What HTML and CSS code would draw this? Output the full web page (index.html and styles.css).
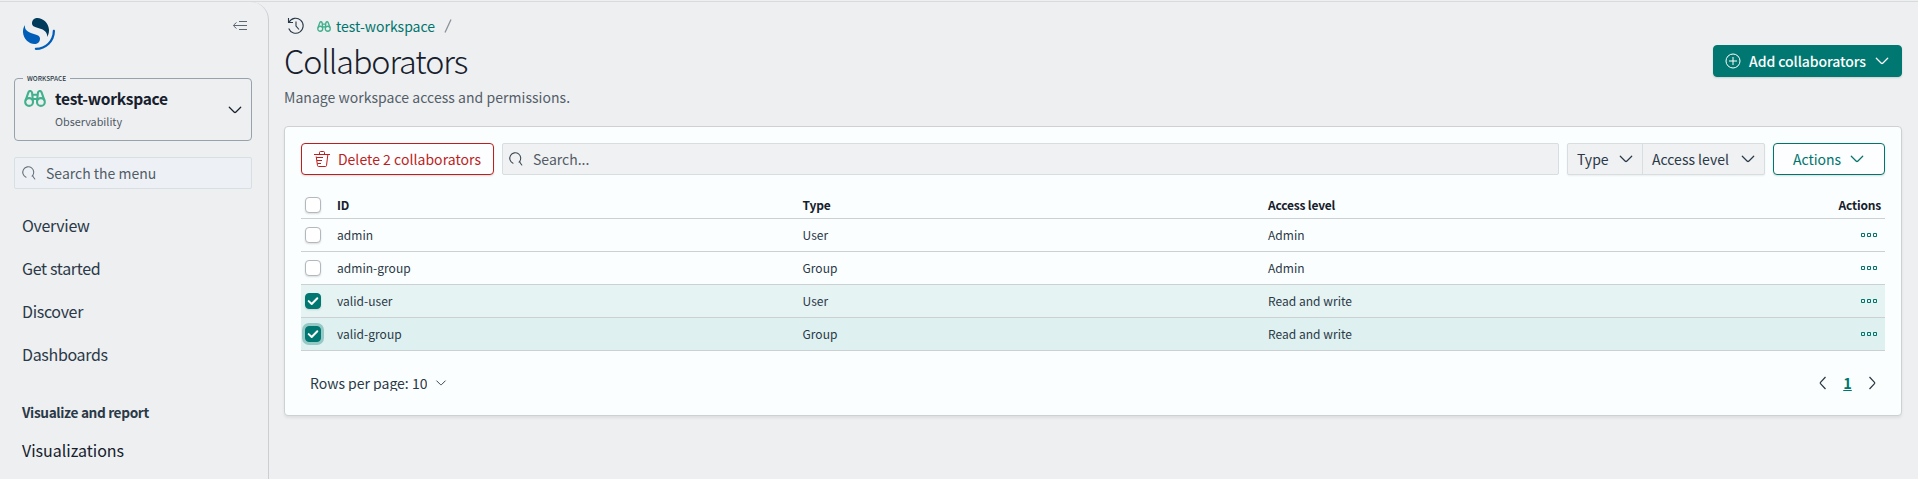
FILE: index.html
```
<!DOCTYPE html>
<html lang="en">
<head>
<meta charset="utf-8">
<title>Collaborators</title>
<link rel="stylesheet" href="styles.css">
</head>
<body>
<svg class="defs" aria-hidden="true">
  <symbol id="down" viewBox="0 0 16 16"><path d="M2.3 5.2l5 5q.7.6 1.4 0l5-5" fill="none" stroke="currentColor" stroke-width="1.25" stroke-linecap="round"/></symbol>
  <symbol id="search" viewBox="0 0 16 16"><path d="M5 12.300A5.500 5.500 0 1 1 11.200 11.100M11 11l1.200 0M12.300 12l1.500 2" fill="none" stroke="currentColor" stroke-width="1.1" stroke-linecap="round"/></symbol>
  <symbol id="binoculars" viewBox="0 0 22 17"><g fill="none" stroke="currentColor" stroke-width="2.1" stroke-linejoin="round"><circle cx="5.1" cy="12" r="3.9"/><circle cx="16.9" cy="12" r="3.9"/><path d="M1.5 10.6L4.5 2.2Q5 1 6.2 1T8 2.4L9 11M20.5 10.6L17.5 2.2Q17 1 15.8 1T14 2.4L13 11M8.2 4.7h5.6M8.7 9h4.6"/></g></symbol>
  <symbol id="check" viewBox="0 0 16 16"><path d="M3.7 8.1l3 2.9 5.6-5.7" fill="none" stroke="#fff" stroke-width="2" stroke-linecap="round" stroke-linejoin="round"/></symbol>
  <symbol id="boxes" viewBox="0 0 16 4"><path d="M.5.5h3v3h-3zM6.500.5h3v3h-3zM12.500.5h3v3h-3z" fill="none" stroke="currentColor"/></symbol>
</svg>
<div class="app">
  <aside class="sidebar">
    <div class="brand">
      <svg class="logo" viewBox="0 0 64 64"><path fill="#005EB8" d="M61.7374 23.5C60.4878 23.5 59.4748 24.513 59.4748 25.7626C59.4748 44.3813 44.3813 59.4748 25.7626 59.4748C24.513 59.4748 23.5 60.4878 23.5 61.7374C23.5 62.987 24.513 64 25.7626 64C46.8805 64 64 46.8805 64 25.7626C64 24.513 62.987 23.5 61.7374 23.5Z"/><path fill="#003B5C" d="M48.0814 38C50.2572 34.4505 52.3615 29.7178 51.9475 23.0921C51.0899 9.36725 38.6589 -1.04463 26.9206 0.0837327C22.3253 0.525465 17.6068 4.2712 18.026 10.9805C18.2082 13.8961 19.6352 15.6169 21.9544 16.9399C24.1618 18.1992 26.9978 18.9969 30.2128 19.9011C34.0962 20.9934 38.6009 22.2203 42.063 24.7717C46.2125 27.8295 49.0491 31.3743 48.0814 38Z"/><path fill="#005EB8" d="M3.91861 14C1.74276 17.5495 -0.361506 22.2822 0.0524931 28.9079C0.910072 42.6327 13.3411 53.0446 25.0794 51.9163C29.6747 51.4745 34.3932 47.7288 33.974 41.0195C33.7918 38.1039 32.3647 36.3831 30.0456 35.0601C27.8382 33.8008 25.0022 33.0031 21.7872 32.0989C17.9038 31.0066 13.3991 29.7797 9.93694 27.2283C5.78746 24.1704 2.95092 20.6257 3.91861 14Z"/></svg>
      <svg class="collapse" viewBox="0 0 16 16"><path d="M7 3.500h8M1.500 7.500H15M7 11.500h8M4.500 4.500L2 6.700Q1 7.500 2 8.300L4.500 10.500" fill="none" stroke="currentColor"/></svg>
    </div>
    <fieldset class="workspace">
      <legend>WORKSPACE</legend>
      <svg class="ws-icon"><use href="#binoculars"/></svg>
      <div class="ws-text"><div class="ws-name">test-workspace</div><div class="ws-kind">Observability</div></div>
      <svg class="icon"><use href="#down"/></svg>
    </fieldset>
    <div class="menu-search"><svg class="icon"><use href="#search"/></svg><span>Search the menu</span></div>
    <nav class="menu">
      <a>Overview</a><a>Get started</a><a>Discover</a><a>Dashboards</a>
      <h2>Visualize and report</h2>
      <a class="sub">Visualizations</a>
    </nav>
  </aside>
  <main class="main">
    <div class="crumbs">
      <svg class="history" viewBox="0 0 18 18"><path d="M1.500 1v4.500H6M2 5.300A7.500 7.500 0 1 1 1.700 11.500M9 4.500V9l3 3.500" fill="none" stroke="currentColor" stroke-width="1.100"/></svg>
      <svg class="crumb-icon"><use href="#binoculars"/></svg>
      <a>test-workspace</a>
      <svg class="slash" viewBox="0 0 8 14"><path d="M1 13.500L7 .5" stroke="#8b9298" stroke-width="1.300"/></svg>
    </div>
    <div class="heading">
      <h1>Collaborators</h1>
      <button class="btn primary"><svg class="icon" viewBox="0 0 16 16"><g fill="none" stroke="currentColor"><circle cx="8" cy="8" r="7"/><path d="M8 4v8M4 8h8"/></g></svg><span>Add collaborators</span><svg class="icon"><use href="#down"/></svg></button>
    </div>
    <p class="desc">Manage workspace access and permissions.</p>
    <section class="panel">
      <div class="toolbar">
        <button class="btn danger"><svg class="icon" viewBox="0 0 16 16"><path d="M0 3.500h16M5.500 3.500V1.500q0-1 1-1h3q1 0 1 1v2M2.200 5.500l1.300 9q.1 1 1.100 1h6.800q1 0 1.100-1l1.300-10.500M2.500 6.500H9M3 9.500h5M3.500 12.500H7" fill="none" stroke="currentColor"/></svg><span>Delete 2 collaborators</span></button>
        <div class="search"><svg class="icon"><use href="#search"/></svg><span>Search...</span></div>
        <div class="filters">
          <button class="filter type"><span>Type</span><svg class="icon"><use href="#down"/></svg></button>
          <button class="filter"><span>Access level</span><svg class="icon"><use href="#down"/></svg></button>
        </div>
        <button class="btn outline"><span>Actions</span><svg class="icon"><use href="#down"/></svg></button>
      </div>
      <div class="table">
        <div class="row head"><i class="box"></i><span>ID</span><span>Type</span><span>Access level</span><span class="end">Actions</span></div>
        <div class="row"><i class="box"></i><span>admin</span><span>User</span><span>Admin</span><svg class="more"><use href="#boxes"/></svg></div>
        <div class="row"><i class="box"></i><span>admin-group</span><span>Group</span><span>Admin</span><svg class="more"><use href="#boxes"/></svg></div>
        <div class="row selected"><i class="box on"><svg><use href="#check"/></svg></i><span>valid-user</span><span>User</span><span>Read and write</span><svg class="more"><use href="#boxes"/></svg></div>
        <div class="row selected hover"><i class="box on focus"><svg><use href="#check"/></svg></i><span>valid-group</span><span>Group</span><span>Read and write</span><svg class="more"><use href="#boxes"/></svg></div>
      </div>
      <div class="footer">
        <div class="per-page"><span>Rows per page: 10</span><svg><use href="#down"/></svg></div>
        <div class="pager">
          <svg class="icon" viewBox="0 0 16 16"><path d="M10.500 2l-5 5.300q-.6.7 0 1.400l5 5.300" fill="none" stroke="currentColor" stroke-width="1.250"/></svg>
          <b>1</b>
          <svg class="icon" viewBox="0 0 16 16"><path d="M5.500 2l5 5.300q.6.7 0 1.400l-5 5.300" fill="none" stroke="currentColor" stroke-width="1.250"/></svg>
        </div>
      </div>
    </section>
  </main>
</div>
</body>
</html>
```
FILE: styles.css
```
* { box-sizing: border-box; }
body { margin: 0; height: 479px; overflow: hidden; background: #eeeff1; color: #2a3947; font: 14px/20px "Noto Sans CJK SC", sans-serif; }
svg { display: block; flex: none; }
span, a, h1, h2, legend { white-space: nowrap; }
button { font: inherit; margin: 0; cursor: pointer; }
.defs { display: none; }
.icon { width: 16px; height: 16px; }
.app { display: flex; height: 479px; margin-top: 1px; border-top: 1px solid #d5dcda; }

.sidebar { width: 269px; flex: none; height: 490px; padding: 16px 16px 0 14px; border-right: 1px solid #cbced5; border-top-right-radius: 18px; }
.brand { display: flex; justify-content: space-between; padding: 0 4px 0 9px; height: 56px; }
.logo { width: 32px; height: 32px; }
.collapse { width: 16px; height: 16px; color: #5a6875; }
.workspace { display: flex; align-items: flex-start; width: 238px; height: 67px; margin: 0; padding: 0 8px 0 9px; border: 1px solid #98a2ac; border-radius: 4px; color: #16202c; }
.workspace legend { margin-left: -1px; padding: 0 4px; font-size: 6.5px; font-weight: 500; line-height: 8px; color: #2a3947; }
.ws-icon { width: 22px; height: 17px; margin-top: 8px; color: #41b08d; }
.ws-text { flex: 1; padding-left: 9px; }
.ws-name { font-size: 15.500px; font-weight: 700; letter-spacing: -.28px; line-height: 24px; margin-top: 4px; }
.ws-kind { font-size: 10.800px; line-height: 16px; color: #4f5a65; margin-top: 3px; }
.workspace .icon { margin-top: 20px; }
.menu-search { display: flex; align-items: center; gap: 9px; width: 238px; height: 32px; margin-top: 16px; padding-left: 6px; border: 1px solid #d8dfe2; border-radius: 2px; background: #edf1f5; color: #525c66; }
.menu-search .icon { color: #69727b; }
.menu { padding: 15px 0 0 8px; }
.menu a, .menu h2 { display: block; height: 43px; line-height: 43px; font-size: 16px; letter-spacing: -.33px; }
.menu h2 { margin: 18px 0 0; height: 37px; line-height: 37px; font-size: 13.700px; font-weight: 700; letter-spacing: -.37px; }
.menu .sub { height: 38px; line-height: 38px; letter-spacing: 0; color: #16202c; }

.main { flex: 1; min-width: 0; padding: 12px 16px 0 15px; }
.crumbs { display: flex; align-items: center; height: 24px; padding-left: 3px; }
.crumbs a { width: 100px; font-size: 14px; color: #00756c; }
.history { width: 18px; height: 18px; color: #2a3947; }
.crumb-icon { width: 14px; height: 11px; margin: 0 5px 0 12px; color: #41b08d; }
.slash { width: 8px; height: 14px; margin-left: 8px; }
.heading { display: flex; justify-content: space-between; align-items: center; height: 46px; }
h1 { margin: -2px 0 0; font-size: 32.300px; line-height: 46px; font-weight: 300; letter-spacing: -1.080px; color: #16202c; }
.desc { margin: 3px 0 0; color: #535e69; height: 39px; letter-spacing: .04px; }
.btn { display: flex; align-items: center; justify-content: center; height: 32px; padding: 0; border: 1px solid; border-radius: 4px; box-shadow: 0 1px 2px #0002; }
.btn span, .search span, .filter span { margin-top: -1px; }
.primary { width: 189px; height: 32px; gap: 8px; background: #007871; color: #fff; border-color: #007871; font-weight: 500; letter-spacing: -.08px; }
.danger { width: 193px; gap: 8px; background: #fcfeff; color: #bd1f1d; letter-spacing: .04px; }
.outline { width: 112px; gap: 8px; background: #fcfeff; color: #00756c; }

.panel { height: 290px; padding: 16px; border: 1px solid #cdd1d3; border-radius: 4px; background: #fbfefe; box-shadow: 0 2px 3px #0001; }
.toolbar { display: flex; gap: 8px; height: 32px; }
.search { flex: 1; display: flex; align-items: center; gap: 9px; padding-left: 5px; border: 1px solid #d8dde0; border-radius: 2px; background: #f0f1f3; color: #525c66; }
.search .icon { color: #3c4955; }
.filters { display: flex; width: 198px; border: 1px solid #d8dde0; border-radius: 2px; background: #f0f1f3; box-shadow: 0 1px 2px #0001; }
.filter { display: flex; align-items: center; justify-content: space-between; flex: 1; padding: 0 8px 0 9px; border: 0; background: none; color: #2a3947; }
.filter.type { flex: 0 0 75px; border-right: 1px solid #d8dde0; }

.table { margin-top: 16px; font-size: 12px; }
.row { display: grid; grid-template-columns: 36px 465.500px 465.500px 1fr auto; align-items: center; height: 33px; border-bottom: 1px solid #cbd0d3; }
.row span { letter-spacing: .03px; }
.head { height: 28px; font-weight: 700; color: #16202c; }
.head span { letter-spacing: -.19px; }
.end { padding-right: 4px; }
.more { width: 16px; height: 4px; margin-right: 8px; color: #00756c; }
.selected { background: #e6f3f3; }
.hover { background: #def0ef; }
.box { width: 16px; height: 16px; margin-left: 4px; border: 1px solid #b3b8bd; border-radius: 4px; background: #fff; box-shadow: 0 1px 2px #0002; }
.box svg { width: 16px; height: 16px; margin: -1px; }
.on { border-color: #007871; background: #007871; }
.focus { box-shadow: 0 0 0 3px #96c8c5; }

.footer { display: flex; justify-content: space-between; margin-top: 16px; height: 32px; align-items: center; }
.per-page { display: flex; align-items: center; gap: 8px; padding-left: 9px; }
.per-page span { height: 16px; line-height: 16px; overflow: hidden; margin-top: -1px; }
.per-page svg { width: 12px; height: 12px; }
.pager { display: flex; align-items: center; padding-right: 5px; gap: 12px; }
.pager b { width: 9px; font-size: 14.500px; text-align: center; color: #00756c; text-decoration: underline; text-decoration-thickness: 1px; text-underline-offset: 1px; }
```
